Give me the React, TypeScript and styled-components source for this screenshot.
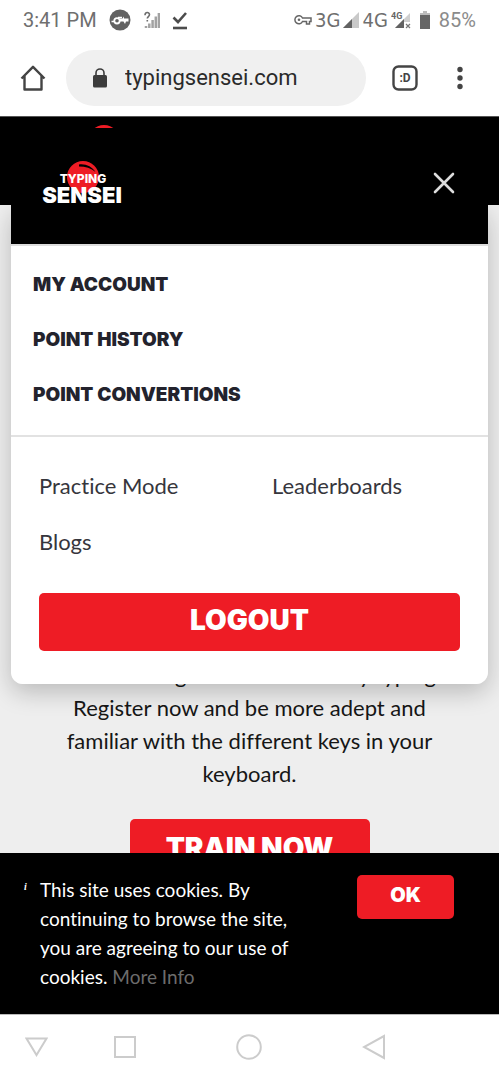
import React from "react";
import styled, { createGlobalStyle } from "styled-components";

const red = "#ee1c25";
const displayFont = `Inter, "Liberation Sans", sans-serif`;
const bodyFont = `Lato, "Open Sans", sans-serif`;
const systemFont = `Roboto, "Liberation Sans", sans-serif`;

const GlobalStyle = createGlobalStyle`
  *, *::before, *::after { box-sizing: border-box; }
  body { margin: 0; background: #fff; font-family: ${bodyFont}; font-variant-ligatures: none; }
  button, input { font: inherit; }
  button { border: 0; padding: 0; background: none; cursor: pointer; }
  a { color: inherit; text-decoration: none; }
  p { margin: 0; }
  svg { display: block; flex: none; }
`;

const Screen = styled.div`
  display: flex;
  flex-direction: column;
  height: 100vh;
  overflow: hidden;
`;

const StatusBar = styled.div`
  display: flex;
  flex: none;
  align-items: center;
  justify-content: space-between;
  height: 40px;
  padding: 0 23px;
  color: #6f6f6f;
  font: 20px/24px ${systemFont};
`;

const StatusGroup = styled.div<{ $gap: number }>`
  display: flex;
  align-items: center;
  gap: ${(p) => p.$gap}px;
`;

const Network = styled.span`
  font: 20px/24px "DejaVu Sans Condensed", "Noto Sans", sans-serif;
`;

const Percent = styled.span`
  margin-left: 2px;
  color: #8b8b8b;
`;

const BrowserBar = styled.div`
  display: flex;
  flex: none;
  align-items: center;
  height: 77px;
  padding: 0 26px 0 20px;
  border-bottom: 1px solid #555;
`;

const IconButton = styled.button`
  display: flex;
  flex: none;
  align-items: center;
  justify-content: center;
  width: 26px;
  height: 40px;
`;

const AddressField = styled.label`
  display: flex;
  flex: 1;
  align-items: center;
  gap: 17px;
  height: 56px;
  min-width: 0;
  margin: 0 26px 0 20px;
  padding: 0 26px;
  border-radius: 28px;
  background: #f0f0f0;
`;

const AddressInput = styled.input`
  flex: 1;
  min-width: 0;
  padding: 0;
  border: 0;
  outline: 0;
  background: transparent;
  color: #2a2a2a;
  font: 22px/28px ${systemFont};
`;

const Tools = styled.div`
  display: flex;
  gap: 29px;
`;

const Viewport = styled.div`
  position: relative;
  flex: 1;
  min-height: 0;
  overflow: hidden;
  background: #eee;
`;

const SiteHeader = styled.header`
  height: 88px;
  padding: 8px 63px;
  background: #000;
`;

const Hero = styled.main`
  display: flex;
  flex-direction: column;
  align-items: center;
  gap: 29px;
  padding: 453px 40px 0;
`;

const HeroText = styled.p`
  color: #161616;
  font-size: 22px;
  line-height: 33px;
  text-align: center;
`;

const RedButton = styled.button<{ $size: "large" | "small" }>`
  border-radius: 5px;
  background: ${red};
  color: #fff;
  font-family: ${displayFont};
  font-weight: 900;
  font-size: ${(p) => (p.$size === "large" ? 28 : 20)}px;
  line-height: ${(p) => (p.$size === "large" ? 54 : 40)}px;
  height: ${(p) => (p.$size === "large" ? 58 : 44)}px;
  padding: 0 33px 4px;
  text-transform: uppercase;
  white-space: nowrap;
`;

const LogoutButton = styled(RedButton)`
  display: block;
  width: 100%;
`;

const TrainButton = styled(RedButton)`
  width: 240px;
  padding-bottom: 0;
`;

const MenuPanel = styled.nav`
  position: absolute;
  top: 11px;
  left: 11px;
  right: 11px;
  overflow: hidden;
  border-radius: 0 0 12px 12px;
  background: #fff;
`;

const MenuShadow = styled.div`
  position: absolute;
  top: 88px;
  left: 11px;
  right: 11px;
  height: 479px;
  border-radius: 12px;
  box-shadow: 0 8px 24px rgba(0, 0, 0, 0.22);
`;

const MenuHeader = styled.div`
  display: flex;
  justify-content: space-between;
  align-items: flex-start;
  height: 116px;
  padding: 33px 31px;
  background: #000;
`;

const CloseButton = styled(IconButton)`
  height: 44px;
`;

const AccountLinks = styled.div`
  display: flex;
  flex-direction: column;
  align-items: flex-start;
  gap: 31px;
  padding: 27px 22px 28px;
  border-top: 2px solid #ddd;
  border-bottom: 2px solid #e2e2e2;
  color: #23232d;
  font: 900 19px/24px ${displayFont};
  text-transform: uppercase;
`;

const MenuFooter = styled.div`
  padding: 35px 28px 33px;
`;

const SiteLinks = styled.div`
  display: grid;
  grid-template-columns: 233px 1fr;
  row-gap: 28px;
  margin-bottom: 37px;
  color: #36363c;
  font-size: 22px;
  line-height: 28px;
`;

const CookieBar = styled.aside`
  display: flex;
  flex: none;
  align-items: flex-start;
  justify-content: space-between;
  padding: 22px 45px 23px 24px;
  background: #000;
  color: #fff;
`;

const CookieMessage = styled.div`
  display: flex;
  gap: 11px;
  font-size: 19px;
  line-height: 29px;
`;

const InfoMark = styled.i`
  flex: none;
  width: 5px;
  font: italic bold 10px/24px "Liberation Serif", serif;
`;

const CookieText = styled.p`
  max-width: 260px;
`;

const MoreInfo = styled.a`
  color: #6c6c6c;
`;

const SystemNav = styled.div`
  display: grid;
  flex: none;
  grid-template-columns: 88fr 124fr 126fr auto;
  justify-items: start;
  align-items: center;
  height: 66px;
  padding: 0 113px 2px 25px;
  border-top: 1px solid #bbb;
`;

const NavButton = styled(IconButton)`
  width: auto;
`;

function Logo() {
  return (
    <svg width="82" height="46" viewBox="0 0 82 46" role="img" aria-label="Typing Sensei">
      <circle cx="41" cy="16" r="16" fill={red} />
      <path d="M37 3.500c7-.8 13 2.200 16.500 7.500-4.500-3.800-10-5.500-16.500-5.500z" fill="#000" />
      <text x="41" y="22" textAnchor="middle" fill="#fff" fontFamily="Inter, sans-serif" fontWeight="800" fontSize="12">
        TYPING
      </text>
      <text x="40" y="42" textAnchor="middle" fill="#fff" fontFamily="Inter, sans-serif" fontWeight="900" fontSize="22">
        SENSEI
      </text>
    </svg>
  );
}

function NotificationIcons() {
  return (
    <>
      <svg width="22" height="22" viewBox="0 0 22 22">
        <circle cx="11" cy="11" r="10.500" fill="#626262" />
        <circle cx="8" cy="11.800" r="2.700" fill="none" stroke="#fff" strokeWidth="1.800" />
        <path d="M2.500 12.500h3M9 8.500h4" fill="none" stroke="#fff" strokeWidth="1.500" />
        <path d="M11 9.500h2.500L15 7.500v2h4.500v3H17l-1 2.500-1.500-2.500H11z" fill="#fff" />
      </svg>
      <svg width="17" height="18" viewBox="0 0 17 18">
        <path d="M2 4.200C2 .8 6.500.8 6.500 3.600c0 2-2.200 2-2.200 4M4.300 9v1.600" fill="none" stroke="#6c6c6c" strokeWidth="1.600" />
        <path d="M3 15v2M6.300 12.500V17M9.600 9V17M12.800 5.500V17M15.900 2V17" stroke="#a2a2a2" strokeWidth="2.500" />
      </svg>
      <svg width="16" height="19" viewBox="0 0 16 19">
        <path d="M1.500 6.500 6 11 14 2" fill="none" stroke="#4c4c4c" strokeWidth="2.600" />
        <path d="M1 17h14" stroke="#4c4c4c" strokeWidth="2.600" />
      </svg>
    </>
  );
}

function SignalIcon() {
  return (
    <svg width="16" height="16" viewBox="0 0 16 16">
      <path d="M16 0v16H0z" fill="#c9c9c9" />
      <path d="M9 7v9H0z" fill="#626262" />
    </svg>
  );
}

function StatusIcons() {
  return (
    <StatusGroup $gap={3}>
      <svg width="18" height="12" viewBox="0 0 18 12">
        <path d="M8.500 4H17v3.500h-1.500V10h-3V7.500h-4a4 4 0 1 1 0-3.500z" fill="none" stroke="#666" strokeWidth="1.500" />
        <circle cx="5" cy="5.800" r="1.300" fill="#666" />
      </svg>
      <Network>3G</Network>
      <SignalIcon />
      <Network>4G</Network>
      <svg width="20" height="18" viewBox="0 0 20 18">
        <path d="M19 2v15H4z" fill="#cfcfcf" />
        <path d="M13 8v9H4z" fill="#626262" />
        <path d="M13 11h7v7h-7z" fill="#fff" />
        <path d="m15 13 4 4m0-4-4 4" stroke="#777" strokeWidth="1.200" />
        <text x="0" y="8" fill="#666" fontFamily="Roboto, sans-serif" fontWeight="700" fontSize="9">4G</text>
      </svg>
      <svg width="20" height="18" viewBox="0 0 20 18">
        <path d="M9 0h4v2h3v3H6V2h3z" fill="#bdbdbd" />
        <path d="M6 4h10v14H6z" fill="#666" />
      </svg>
      <Percent>85%</Percent>
    </StatusGroup>
  );
}

export default function App() {
  return (
    <Screen>
      <GlobalStyle />
      <StatusBar>
        <StatusGroup $gap={12}>
          <span>3:41 PM</span>
          <NotificationIcons />
        </StatusGroup>
        <StatusIcons />
      </StatusBar>

      <BrowserBar>
        <IconButton aria-label="Home">
          <svg width="26" height="26" viewBox="0 0 26 26" fill="none" stroke="#444" strokeWidth="2.400" strokeLinejoin="round">
            <path d="M1.500 13.500 13 1.800l11.500 11.700M4.500 11v13.500h17V11" />
          </svg>
        </IconButton>
        <AddressField>
          <svg width="16" height="20" viewBox="0 0 16 20">
            <rect x="1" y="7" width="14" height="12.500" rx="1.500" fill="#3c3c3c" />
            <path d="M4 8V5a4 4 0 0 1 8 0v3" fill="none" stroke="#3c3c3c" strokeWidth="1.600" />
          </svg>
          <AddressInput aria-label="Address" defaultValue="typingsensei.com" />
        </AddressField>
        <Tools>
          <IconButton aria-label="Open tabs">
            <svg width="26" height="26" viewBox="0 0 26 26">
              <rect x="1.500" y="1.500" width="23" height="23" rx="5" fill="none" stroke="#444" strokeWidth="2.400" />
              <text x="13" y="17" textAnchor="middle" fill="#444" fontFamily="Roboto, sans-serif" fontWeight="700" fontSize="12">:D</text>
            </svg>
          </IconButton>
          <IconButton aria-label="Browser menu">
            <svg width="6" height="24" viewBox="0 0 6 24" fill="#444">
              <circle cx="3" cy="3.500" r="2.700" />
              <circle cx="3" cy="12" r="2.700" />
              <circle cx="3" cy="20.500" r="2.700" />
            </svg>
          </IconButton>
        </Tools>
      </BrowserBar>

      <Viewport>
        <SiteHeader>
          <Logo />
        </SiteHeader>
        <Hero>
          <HeroText>
            Start learning and see the fun by typing.
            <br />
            Register now and be more adept and
            <br />
            familiar with the different keys in your
            <br />
            keyboard.
          </HeroText>
          <TrainButton $size="large">Train now</TrainButton>
        </Hero>

        <MenuShadow />
        <MenuPanel>
          <MenuHeader>
            <Logo />
            <CloseButton aria-label="Close menu">
              <svg width="22" height="22" viewBox="0 0 22 22" stroke="#ddd" strokeWidth="2.600" strokeLinecap="round">
                <path d="m2 2 18 18M20 2 2 20" />
              </svg>
            </CloseButton>
          </MenuHeader>
          <AccountLinks>
            <a href="#account">My account</a>
            <a href="#history">Point history</a>
            <a href="#convertions">Point convertions</a>
          </AccountLinks>
          <MenuFooter>
            <SiteLinks>
              <a href="#practice">Practice Mode</a>
              <a href="#leaderboards">Leaderboards</a>
              <a href="#blogs">Blogs</a>
            </SiteLinks>
            <LogoutButton $size="large">Logout</LogoutButton>
          </MenuFooter>
        </MenuPanel>
      </Viewport>

      <CookieBar>
        <CookieMessage>
          <InfoMark>i</InfoMark>
          <CookieText>
            This site uses cookies. By continuing to browse the site, you are agreeing to our use of cookies.{" "}
            <MoreInfo href="#cookies">More Info</MoreInfo>
          </CookieText>
        </CookieMessage>
        <RedButton $size="small">OK</RedButton>
      </CookieBar>

      <SystemNav>
        <NavButton aria-label="Hide">
          <svg width="23" height="20" viewBox="0 0 23 20" fill="none" stroke="#ccc" strokeWidth="2">
            <path d="M1.500 1.500h20l-10 16.500z" />
          </svg>
        </NavButton>
        <NavButton aria-label="Recent apps">
          <svg width="24" height="24" viewBox="0 0 24 24" fill="none" stroke="#ccc" strokeWidth="2">
            <path d="M2 2h20v20H2z" />
          </svg>
        </NavButton>
        <NavButton aria-label="Home screen">
          <svg width="26" height="26" viewBox="0 0 26 26" fill="none" stroke="#ccc" strokeWidth="2">
            <circle cx="13" cy="13" r="11.800" />
          </svg>
        </NavButton>
        <NavButton aria-label="Back">
          <svg width="24" height="26" viewBox="0 0 24 26" fill="none" stroke="#ccc" strokeWidth="2">
            <path d="M22 2v22L2 13z" />
          </svg>
        </NavButton>
      </SystemNav>
    </Screen>
  );
}
